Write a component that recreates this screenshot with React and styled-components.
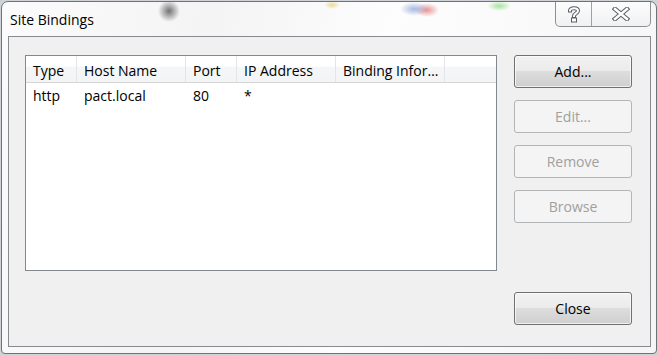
import React from "react";
import styled, { createGlobalStyle } from "styled-components";

const Global = createGlobalStyle`
  html, body { margin: 0; padding: 0; }
  body {
    width: 658px;
    height: 355px;
    overflow: hidden;
    background: #cfd3d8;
    font-family: "Open Sans", "Noto Sans", sans-serif;
    font-size: 12px;
    color: #000;
  }
`;

const Window = styled.div`
  box-sizing: border-box;
  margin: 1px 1px 0 1px;
  width: 656px;
  height: 353px;
  border: 1px solid #6e7378;
  border-radius: 7px 7px 4px 4px;
  background:
    radial-gradient(circle at 167px 9px, rgba(70, 70, 70, 0.75) 0, rgba(90, 90, 90, 0) 11px),
    radial-gradient(ellipse 14px 7px at 412px 7px, rgba(110, 140, 210, 0.6) 0, rgba(120, 150, 210, 0) 100%),
    radial-gradient(ellipse 12px 7px at 425px 8px, rgba(220, 80, 80, 0.6) 0, rgba(220, 90, 90, 0) 100%),
    radial-gradient(ellipse 12px 5px at 497px 4px, rgba(90, 210, 80, 0.55) 0, rgba(100, 210, 90, 0) 100%),
    radial-gradient(ellipse 8px 4px at 330px 3px, rgba(230, 190, 60, 0.55) 0, rgba(230, 190, 60, 0) 100%),
    radial-gradient(ellipse 10px 5px at 597px 5px, rgba(120, 200, 230, 0.45) 0, rgba(120, 200, 230, 0) 100%),
    linear-gradient(100deg, #fbfbfb 0%, #f4f4f4 30%, #fdfdfd 55%, #f5f5f5 100%);
  display: flex;
  flex-direction: column;
  padding: 0 5px 6px 6px;
`;

const TitleBar = styled.div`
  height: 34px;
  display: flex;
  align-items: flex-start;
  justify-content: space-between;
`;

const Title = styled.div`
  font-size: 14px;
  color: #000;
  padding: 8px 0 0 2px;
`;

const Caption = styled.div`
  display: flex;
  height: 24px;
  border: 1px solid #8c9095;
  border-top: none;
  border-radius: 0 0 5px 5px;
  background: linear-gradient(#fdfdfd, #f0f1f2);
`;

const CaptionButton = styled.div`
  width: ${(p) => p.$w}px;
  display: flex;
  align-items: center;
  justify-content: center;
  & + & { border-left: 1px solid #9ea2a6; }
`;

const Client = styled.div`
  flex: 1;
  box-sizing: border-box;
  border: 1px solid #878b90;
  background: #f0f0f0;
  display: grid;
  grid-template-columns: 472px 1fr;
  column-gap: 17px;
  padding: 18px 17px 21px 16px;
`;

const List = styled.div`
  box-sizing: border-box;
  height: 216px;
  border: 1px solid #828790;
  background: #fff;
`;

const HeaderRow = styled.div`
  display: flex;
  height: 26px;
  background: linear-gradient(#ffffff 0%, #ffffff 40%, #f5f6f7 41%, #f3f4f5 100%);
  border-bottom: 1px solid #d5d5d5;
`;

const HeaderCell = styled.div`
  width: ${(p) => p.$w}px;
  box-sizing: border-box;
  border-right: 1px solid #e3e5e7;
  padding-left: 7px;
  line-height: 29px;
  white-space: nowrap;
  overflow: hidden;
  font-size: 14px;
`;

const Row = styled.div`
  display: flex;
  height: 24px;
  align-items: center;
`;

const Cell = styled.div`
  width: ${(p) => p.$w}px;
  box-sizing: border-box;
  padding-left: 7px;
  white-space: nowrap;
  font-size: 14px;
`;

const Side = styled.div`
  display: flex;
  flex-direction: column;
  gap: 12px;
`;

const Button = styled.div`
  box-sizing: border-box;
  width: 118px;
  height: 33px;
  border: 1px solid ${(p) => (p.$disabled ? "#b3b6b9" : "#707070")};
  border-radius: 3px;
  display: flex;
  align-items: center;
  justify-content: center;
  font-size: 14px;
  color: ${(p) => (p.$disabled ? "#a0a0a0" : "#000")};
  background: ${(p) =>
    p.$disabled
      ? "#f4f4f4"
      : "linear-gradient(#f2f2f2 0%, #ebebeb 49%, #dddddd 50%, #cfcfcf 100%)"};
  box-shadow: ${(p) => (p.$disabled ? "none" : "inset 0 0 0 1px rgba(255,255,255,0.7)")};
  &:last-child { margin-top: auto; }
`;

const HelpIcon = () => (
  <svg width="16" height="18" viewBox="0 0 16 18">
    <path
      d="M4 5.5 C4 2.5 12 2.5 12 5.8 C12 8.2 8 8.5 8 11"
      fill="none"
      stroke="#5a5f66"
      strokeWidth="4"
      strokeLinecap="square"
    />
    <path
      d="M4 5.5 C4 2.5 12 2.5 12 5.8 C12 8.2 8 8.5 8 11"
      fill="none"
      stroke="#fff"
      strokeWidth="2"
      strokeLinecap="square"
    />
    <rect x="5.5" y="13" width="5" height="4" fill="#fff" stroke="#5a5f66" strokeWidth="1" />
  </svg>
);

const CloseIcon = () => (
  <svg width="18" height="14" viewBox="0 0 18 14">
    <path d="M3 2 L15 12 M15 2 L3 12" stroke="#5a5f66" strokeWidth="4.5" strokeLinecap="square" />
    <path d="M3 2 L15 12 M15 2 L3 12" stroke="#fff" strokeWidth="2.5" strokeLinecap="square" />
  </svg>
);

const columns = [
  { label: "Type", w: 51 },
  { label: "Host Name", w: 109 },
  { label: "Port", w: 51 },
  { label: "IP Address", w: 99 },
  { label: "Binding Infor…", w: 109 },
];

const rows = [["http", "pact.local", "80", "*", ""]];

export default function App() {
  return (
    <>
      <Global />
      <Window>
        <TitleBar>
          <Title>Site Bindings</Title>
          <Caption>
            <CaptionButton $w={35}>
              <HelpIcon />
            </CaptionButton>
            <CaptionButton $w={58}>
              <CloseIcon />
            </CaptionButton>
          </Caption>
        </TitleBar>
        <Client>
          <List>
            <HeaderRow>
              {columns.map((c) => (
                <HeaderCell key={c.label} $w={c.w}>
                  {c.label}
                </HeaderCell>
              ))}
            </HeaderRow>
            {rows.map((r, i) => (
              <Row key={i}>
                {r.map((v, j) => (
                  <Cell key={j} $w={columns[j].w}>
                    {v}
                  </Cell>
                ))}
              </Row>
            ))}
          </List>
          <Side>
            <Button>Add...</Button>
            <Button $disabled>Edit...</Button>
            <Button $disabled>Remove</Button>
            <Button $disabled>Browse</Button>
            <Button>Close</Button>
          </Side>
        </Client>
      </Window>
    </>
  );
}
